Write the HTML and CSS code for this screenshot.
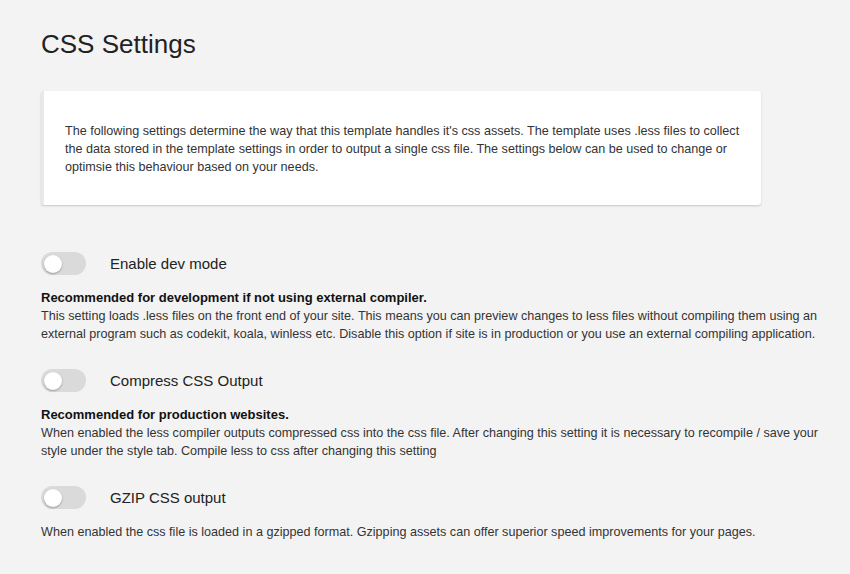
FILE: index.html
```html
<!DOCTYPE html>
<html>
<head>
    <title>CSS Settings</title>
    <link rel="stylesheet" href="styles.css">
</head>
<body>
    <h1>CSS Settings</h1>

    <div class="intro-card">
        <p>The following settings determine the way that this template handles it's css assets. The template uses .less files to collect the data stored in the template settings in order to output a single css file. The settings below can be used to change or optimsie this behaviour based on your needs.</p>
    </div>

    <div class="settings">
        <div class="setting">
            <label class="toggle-row">
                <span class="toggle"><span class="knob"></span></span>
                <span class="toggle-label">Enable dev mode</span>
            </label>
            <p class="setting-desc">
                <strong>Recommended for development if not using external compiler.</strong><br>
                This setting loads .less files on the front end of your site. This means you can preview changes to less files without compiling them using an external program such as codekit, koala, winless etc. Disable this option if site is in production or you use an external compiling application.
            </p>
        </div>

        <div class="setting">
            <label class="toggle-row">
                <span class="toggle"><span class="knob"></span></span>
                <span class="toggle-label">Compress CSS Output</span>
            </label>
            <p class="setting-desc">
                <strong>Recommended for production websites.</strong><br>
                When enabled the less compiler outputs compressed css into the css file. After changing this setting it is necessary to recompile / save your style under the style tab. Compile less to css after changing this setting
            </p>
        </div>

        <div class="setting">
            <label class="toggle-row">
                <span class="toggle"><span class="knob"></span></span>
                <span class="toggle-label">GZIP CSS output</span>
            </label>
            <p class="setting-desc">
                When enabled the css file is loaded in a gzipped format. Gzipping assets can offer superior speed improvements for your pages.
            </p>
        </div>
    </div>
</body>
</html>
```

FILE: styles.css
```css
body {
    font-family: "Liberation Sans", Arial, sans-serif;
    background-color: #f3f3f3;
    color: #333;
    margin: 0;
    padding: 28px 24px 0 41px;
}

h1 {
    font-size: 26px;
    font-weight: normal;
    color: #222;
    margin: 0 0 31px 0;
    line-height: 32px;
}

.intro-card {
    width: 720px;
    background-color: #fff;
    border-left: 3px solid #e9e9e9;
    border-radius: 3px;
    box-shadow: 0 1px 2px rgba(0, 0, 0, 0.18);
    padding: 31px 10px 29px 21px;
    box-sizing: border-box;
}

.intro-card p {
    margin: 0;
    font-size: 12.6px;
    line-height: 18px;
}

.settings {
    margin-top: 47px;
}

.setting {
    margin-bottom: 26px;
}

.toggle-row {
    display: flex;
    align-items: center;
    gap: 24px;
    cursor: pointer;
}

.toggle {
    width: 45px;
    height: 23px;
    border-radius: 12px;
    background-color: #dadada;
    display: flex;
    align-items: center;
    padding-left: 3px;
    box-sizing: border-box;
}

.knob {
    width: 18px;
    height: 18px;
    border-radius: 50%;
    background-color: #fff;
    box-shadow: 0 1px 2px rgba(0, 0, 0, 0.3);
}

.toggle-label {
    font-size: 15px;
    color: #222;
}

.setting-desc {
    margin: 14px 0 0 0;
    font-size: 12.6px;
    line-height: 18px;
}

.setting-desc strong {
    font-size: 13px;
    color: #111;
}
```
